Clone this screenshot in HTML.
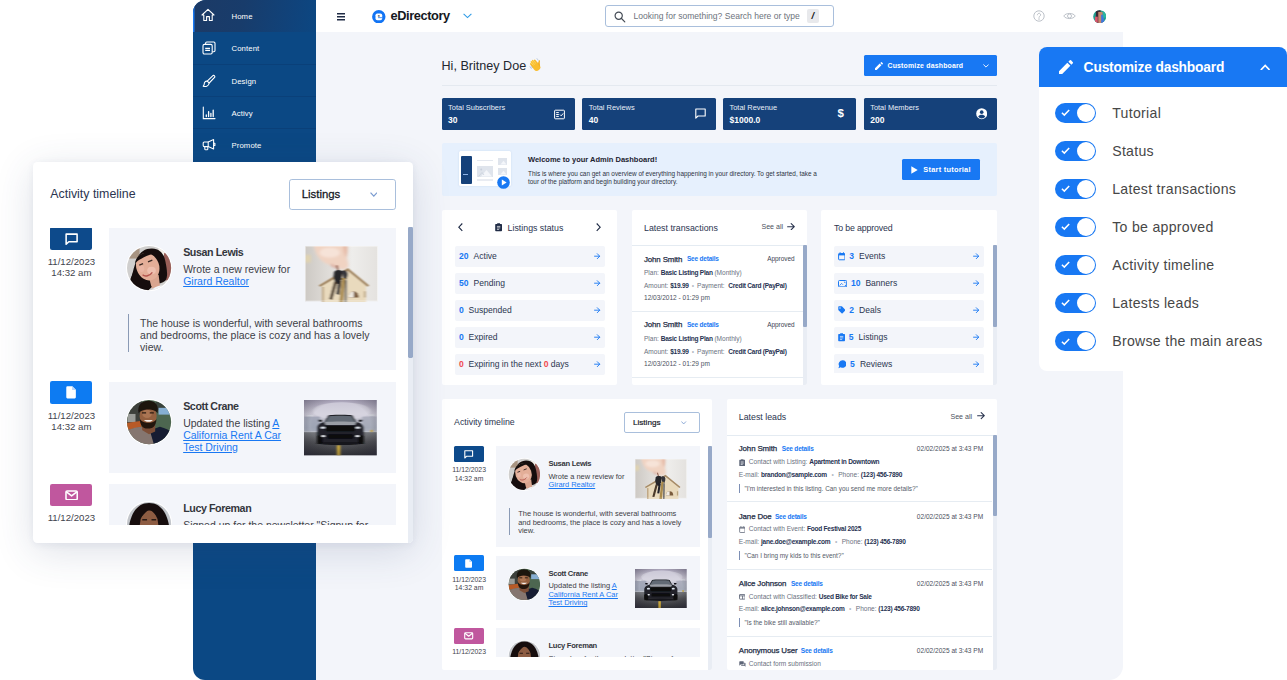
<!DOCTYPE html>
<html lang="en">
<head>
<meta charset="utf-8">
<title>eDirectory Admin Dashboard</title>
<style>
*{box-sizing:border-box;margin:0;padding:0}
html,body{width:1287px;height:680px;overflow:hidden;background:#fff}
body{font-family:"Liberation Sans",sans-serif;color:#2b3550;position:relative}
.abs{position:absolute}
svg{display:block}
a{color:#1878f3}

/* ===== main app window ===== */
#app{position:absolute;left:193px;top:0;width:930px;height:680px;background:#f3f5fa;border-radius:13px 0 14px 12px;overflow:hidden}
#side{position:absolute;left:0;top:0;width:122.6px;height:680px;background:#0b4884}
.nav{position:absolute;left:0;width:123px;height:32px;border-bottom:1px solid #0a4079;color:#fff;font-size:7.75px}
.nav span{position:absolute;left:38.5px;top:13.4px;line-height:8px;letter-spacing:.1px}
.nav svg{position:absolute;left:9px;top:9.2px}
.nav.on{background:linear-gradient(100deg,#1c3a66 0%,#183c6b 40%,#10437b 80%,#0c4782 100%);border-bottom:0;box-shadow:inset 1.5px 0 0 #1878f3}
.nav.on span{top:13.2px}
.nav.on svg{left:8.2px;top:8.4px}
#top{position:absolute;left:123px;top:0;width:807px;height:32px;background:#fff}

/* ===== content ===== */
#hi{position:absolute;left:248.5px;top:57.6px;font-size:12.6px;line-height:16px;color:#23272f;white-space:nowrap}
#cbtn{position:absolute;left:671px;top:55px;width:133px;height:21.4px;background:#1878f3;border-radius:1.5px;color:#fff;font-size:6.9px;font-weight:bold}
#hr1{position:absolute;left:248.5px;top:85px;width:555.5px;height:1px;background:#e4e9f0}
.stat{position:absolute;top:98.2px;width:133.3px;height:31.5px;background:#15417a;border-radius:1.5px;color:#fff}
.stat .l{position:absolute;left:6.5px;top:5.8px;font-size:7.45px;line-height:8px;color:#e8eef7}
.stat .v{position:absolute;left:6.5px;top:17.9px;font-size:8.5px;line-height:9px;font-weight:bold}
.stat svg{position:absolute}
#welcome{position:absolute;left:248.5px;top:142.7px;width:555.5px;height:53.6px;background:#e6f0fd;border-radius:2px}
.card{position:absolute;background:#fff;border-radius:2px;overflow:hidden}

.ct{position:absolute;top:12.9px;font-size:8.8px;line-height:11px;color:#2b3550;white-space:nowrap}
.row{position:absolute;left:13.1px;width:150.2px;height:20.7px;background:#f3f5fa;border-radius:2px;font-size:8.55px;line-height:21.6px;color:#2b3550;white-space:nowrap}
.row b{color:#1878f3;position:absolute;left:4px;top:0}
.row b.r,.row i{color:#f0494f;font-style:normal;font-weight:bold}
.row span{position:absolute;top:0}
.row .ar{position:absolute;right:4.4px;top:7.1px}
.row .ic{position:absolute;left:4px;top:6.2px}
.seeall{position:absolute;top:12.7px;font-size:7.05px;line-height:10px;color:#4b5160;white-space:nowrap}
.sb{position:absolute;top:35.7px;bottom:0;width:4.2px;right:0;background:#e9edf4}
.sb i{position:absolute;left:0;top:0;width:100%;background:#97a9c8;border-radius:1px}
.tx{position:absolute;left:0;width:171.3px;height:65.7px;border-bottom:1px solid #e6ecf2}
.tx .n{position:absolute;left:12.1px;top:8.2px;font-size:7.9px;line-height:11px;color:#232c45;white-space:nowrap;letter-spacing:-.13px;-webkit-text-stroke:.25px #232c45}
.tx .sd{position:absolute;top:9.1px;font-size:6.5px;line-height:10px;font-weight:bold;color:#1878f3;white-space:nowrap;letter-spacing:-.2px}
.tx .st{position:absolute;right:8.5px;top:9.1px;font-size:6.45px;line-height:10px;color:#3c4252;white-space:nowrap}
.tx .ln{position:absolute;left:12.1px;font-size:6.55px;line-height:10px;color:#6b7280;white-space:nowrap}
.tx .ln b{color:#273252;letter-spacing:-.25px}
.tx .ln em{font-style:normal;color:#b4bac4;padding:0 3px}
/*ACT*/
.act .nm{margin-top:1px}
.act .ds{margin-top:.4px}
.act .dt{margin-top:.4px}
.act .sel{position:absolute;left:182px;top:12.3px;width:76.1px;height:21.6px;border:1px solid #a9bfdc;border-radius:2px;background:#fff}
.act .sel span{position:absolute;left:8.2px;top:4.9px;font-size:8.1px;line-height:10px;color:#15181f;-webkit-text-stroke:.2px #15181f}
.act .scr{position:absolute;left:0;top:46.8px;width:266.6px;height:211px;overflow:hidden}
.act .bdg{position:absolute;left:12.3px;width:29.6px;height:16px;margin-top:-.3px;border-radius:1.5px}
.act .dt{position:absolute;left:2.3px;width:50px;text-align:center;font-size:6.85px;line-height:8.2px;color:#3f444d}
.act .it{position:absolute;left:54.2px;width:204px;background:#f3f5fa}
.act .av{position:absolute;left:11.7px;top:12.2px}
.act .nm{position:absolute;left:52.5px;top:12.3px;font-size:7.6px;line-height:10px;font-weight:bold;color:#33363c;white-space:nowrap;letter-spacing:-.29px}
.act .ds{position:absolute;left:52.5px;top:26px;font-size:7.45px;line-height:8.6px;color:#3d4046;white-space:nowrap}
.act .ds a{text-decoration:underline;color:#1878f3}
.act .th{position:absolute;left:139.1px;top:13.2px}
.act .qt{position:absolute;left:13.2px;top:62px;border-left:1px solid #8a9ab5;padding:1.9px 0 1.2px 8px;font-size:7.47px;line-height:8.65px;color:#3d4046;white-space:nowrap;height:27px}

/*scaled copy for floating card*/
#fl .act .nm{margin-top:1.41px}
#fl .act .ds{margin-top:0.56px}
#fl .act .dt{margin-top:0.56px}
#fl .act .sel{left:256.15px;top:17.31px;width:107.1px;height:30.4px;border:1.41px solid #a9bfdc;border-radius:2.81px}
#fl .act .sel span{left:11.54px;top:6.9px;font-size:11.4px;line-height:14.07px;-webkit-text-stroke:0.28px #15181f}
#fl .act .scr{top:65.87px;width:375.21px;height:296.96px}
#fl .act .bdg{left:17.31px;width:41.66px;height:22.52px;margin-top:-0.42px;border-radius:2.11px}
#fl .act .dt{left:3.24px;width:70.37px;font-size:9.64px;line-height:11.54px}
#fl .act .it{left:76.28px;width:287.11px}
#fl .act .av{left:16.47px;top:17.17px}
#fl .act .nm{left:73.89px;top:17.31px;font-size:10.7px;line-height:14.07px;letter-spacing:-0.41px}
#fl .act .ds{left:73.89px;top:36.59px;font-size:10.49px;line-height:12.1px}
#fl .act .th{left:195.77px;top:18.58px}
#fl .act .qt{left:18.58px;top:87.26px;border-left:1.41px solid #8a9ab5;padding:2.67px 0 1.69px 11.26px;font-size:10.51px;line-height:12.17px;height:38px}
#fl .card{border-radius:4.22px}
#fl .ct{top:18.16px;font-size:12.39px;line-height:15.48px}
#fl .sb{top:50.24px;width:5.91px}
#fl .sb i{border-radius:1.41px}
#fl .act .qt{margin-top:-1.2px}
#fl .act .nm{margin-top:-0.42px}
#fl .act .ds{margin-top:-0.42px}
#fl .act .dt{margin-top:0.42px;line-height:11.05px}
#fl .ct{margin-top:0.56px}
#fl .act .th2{margin-left:-1.13px}
/*ENDACT*/
.ld{position:absolute;left:0;width:265.9px;height:67.2px;border-bottom:1px solid #e6ecf2}
.ld .n{position:absolute;left:12.3px;top:8.2px;font-size:7.9px;line-height:11px;color:#232c45;white-space:nowrap;letter-spacing:-.13px;-webkit-text-stroke:.25px #232c45}
.ld .sd{position:absolute;top:9.1px;font-size:6.5px;line-height:10px;font-weight:bold;color:#1878f3;white-space:nowrap;letter-spacing:-.2px}
.ld .d{position:absolute;right:9.3px;top:9.1px;font-size:6.55px;line-height:10px;color:#4b5160;white-space:nowrap}
.ld .ln{position:absolute;left:12.3px;font-size:6.55px;line-height:10px;color:#6b7280;white-space:nowrap}
.ld .ln b{color:#273252;letter-spacing:-.25px}
.ld .ln em{font-style:normal;color:#b4bac4;padding:0 4.5px}
.ld .q{position:absolute;left:12.6px;top:48.4px;height:9px;border-left:1px solid #7d8fb5;padding-left:4.3px;font-size:6.42px;line-height:10px;color:#555b68;white-space:nowrap}
.ld .li{position:absolute;left:12.3px}

#fl{position:absolute;left:33px;top:162px;width:380px;height:381.4px}
#fl .card{box-shadow:0 8.5px 39px rgba(50,70,110,.16),0 1.4px 7px rgba(50,70,110,.07)}
#cz{position:absolute;left:1039px;top:47px;width:248px;height:324px;background:#fff;border-radius:8px 8px 0 8px;overflow:hidden}
#cz .hd{position:absolute;left:0;top:0;width:100%;height:39.5px;background:#1878f3;color:#fff}
#cz .hd span{position:absolute;left:44.6px;top:11.5px;font-size:13.8px;line-height:18px;font-weight:bold;white-space:nowrap;letter-spacing:-.18px}
.tg{position:absolute;left:16px;width:41px;height:20px;border-radius:10px;background:#1878f3}
.tg i{position:absolute;right:.8px;top:.8px;width:18.4px;height:18.4px;border-radius:50%;background:#fff}
.tg svg{position:absolute;left:6.2px;top:6.4px}
.tl{position:absolute;left:73.2px;font-size:14.1px;line-height:18px;color:#474747;white-space:nowrap;letter-spacing:.3px;margin-top:.5px}
</style>
</head>
<body>

<div id="app">
  <!-- sidebar -->
  <div id="side">
    <div class="nav on" style="top:0;height:32px">
      <svg width="14" height="14" viewBox="0 0 14 14" fill="none" stroke="#fff" stroke-width="1.1" stroke-linejoin="round" stroke-linecap="round"><path d="M1 7 L7 1.3 L13 7 H11.2 V12.5 H8.4 V8.6 H5.6 V12.5 H2.8 V7 Z"/></svg>
      <span>Home</span>
    </div>
    <div class="nav" style="top:32px;height:32.9px">
      <svg width="14" height="14" viewBox="0 0 14 14" fill="none" stroke="#fff" stroke-width="1.1" stroke-linejoin="round"><rect x="1" y="3.4" width="9.2" height="9.6" rx="1.4"/><path d="M3.6 3.2 V2.2 a1.2 1.2 0 0 1 1.2 -1.2 H11.8 a1.2 1.2 0 0 1 1.2 1.2 V9.6 a1.2 1.2 0 0 1 -1.2 1.2 H10.4"/><path d="M3.2 7.4 H8 M3.2 9.4 H8" stroke-width="1.3"/></svg>
      <span>Content</span>
    </div>
    <div class="nav" style="top:64.4px;height:32.5px">
      <svg width="14" height="14" viewBox="0 0 14 14" fill="none" stroke="#fff" stroke-width="1.1" stroke-linejoin="round" stroke-linecap="round"><path d="M11.2 1.3 a1.5 1.5 0 0 1 1.6 1.9 L7.2 9 L5.2 7.2 Z"/><path d="M5.2 7.2 C3.4 6.9 2.2 8.2 2.3 9.8 C2.3 11 1.6 11.8 1.2 12.2 C3.2 13 6.8 12.4 7.2 9"/></svg>
      <span>Design</span>
    </div>
    <div class="nav" style="top:96.9px">
      <svg width="14" height="14" viewBox="0 0 14 14" fill="none" stroke="#fff" stroke-width="1.1" stroke-linecap="round"><path d="M1.3 1 V12.6 H13"/><path d="M4.3 10.6 V9 M6.6 10.6 V5.6 M8.9 10.6 V7.4 M11.2 10.6 V4.2" stroke-width="1.3"/></svg>
      <span>Activy</span>
    </div>
    <div class="nav" style="top:128.9px;border-bottom:0">
      <svg width="14" height="14" viewBox="0 0 14 14" fill="none" stroke="#fff" stroke-width="1.1" stroke-linejoin="round" stroke-linecap="round"><path d="M1.2 5 a1 1 0 0 1 1 -1 H6.2 L11.6 1.6 V11 L6.2 8.6 H2.2 a1 1 0 0 1 -1 -1 Z"/><path d="M6.2 4 V8.6 M2.8 8.8 V11 a.8 .8 0 0 0 .8 .8 H5 a.8 .8 0 0 0 .8 -.8 V8.8 M11.8 5.2 H12.9 V7.4 H11.8"/></svg>
      <span>Promote</span>
    </div>
  </div>

  <!-- top bar -->
  <div id="top">
    <svg class="abs" style="left:21.2px;top:12.6px" width="8" height="8" viewBox="0 0 8 8"><path d="M0 .7H8M0 3.7H8M0 6.7H8" stroke="#1f2b45" stroke-width="1.35"/></svg>
    <svg class="abs" style="left:56.2px;top:9.7px" width="13.6" height="13.6" viewBox="0 0 14 14"><circle cx="7" cy="7" r="6.9" fill="#1274f4"/><rect x="3.6" y="3.5" width="6.9" height="7" rx="1.9" fill="#fff"/><ellipse cx="7" cy="6.1" rx="1.1" ry=".6" fill="#3a3a40"/><path d="M6.2 7.9H10.6" stroke="#1274f4" stroke-width=".8"/></svg>
    <div id="logo" class="abs" style="left:74.5px;top:7.5px;font-size:12.8px;line-height:16px;color:#15181e;font-weight:bold;letter-spacing:-.4px">eDirectory</div>
    <svg class="abs" style="left:146.7px;top:12.8px" width="9" height="6" viewBox="0 0 9 6" fill="none" stroke="#2e9be6" stroke-width="1.1"><path d="M.6 .8L4.5 4.6L8.4 .8"/></svg>
    <div class="abs" style="left:289px;top:5px;width:229px;height:21.5px;border:1px solid #a9bfdc;border-radius:3px;background:#fff">
      <svg class="abs" style="left:8px;top:4.6px" width="12" height="12" viewBox="0 0 12 12" fill="none" stroke="#444b55" stroke-width="1.2" stroke-linecap="round"><circle cx="4.7" cy="4.7" r="3.6"/><path d="M7.5 7.5L10.8 10.8"/></svg>
      <div id="srch" class="abs" style="left:27.5px;top:5.2px;font-size:8.55px;line-height:10px;color:#6d737d;white-space:nowrap">Looking for something? Search here or type</div>
      <div class="abs" style="left:201px;top:3.2px;width:11.5px;height:14px;background:#e8e9ec;border-radius:2px;font-size:9.5px;line-height:14px;text-align:center;font-weight:bold;color:#111;font-style:italic">/</div>
    </div>
    <svg class="abs" style="left:717.4px;top:10.4px" width="12" height="12" viewBox="0 0 12 12" fill="none" stroke="#b6bbc3" stroke-width=".9"><circle cx="6" cy="6" r="5.2"/><path d="M4.4 4.8 a1.6 1.6 0 1 1 2.4 1.4 c-.6 .35 -.8 .6 -.8 1.2 M6 8.6 v.9" stroke-linecap="round"/></svg>
    <svg class="abs" style="left:747px;top:11.2px" width="13" height="10" viewBox="0 0 13 10" fill="none" stroke="#b6bbc3" stroke-width=".9"><path d="M.8 5 C2.6 1.6 10.4 1.6 12.2 5 C10.4 8.4 2.6 8.4 .8 5Z"/><circle cx="6.5" cy="5" r="2"/></svg>
    <svg class="abs" style="left:777px;top:9.6px" width="13.4" height="13.4" viewBox="0 0 14 14"><defs><clipPath id="avc"><circle cx="7" cy="7" r="6.8"/></clipPath></defs><g clip-path="url(#avc)"><rect width="14" height="14" fill="#1f9e8f"/><rect x="3" y="0" width="5" height="14" fill="#3a2a35"/><rect x="5.5" y="2" width="4.5" height="12" fill="#c9876e"/><rect x="8.5" y="5" width="3" height="9" fill="#3f78d8"/><rect x="2" y="7" width="3" height="7" fill="#d9556b"/><rect x="10.5" y="0" width="3.5" height="8" fill="#2bb3a0"/></g></svg>
  </div>

  <!-- heading -->
  <div id="hi">Hi, Britney Doe <svg style="display:inline-block;vertical-align:-2.2px;margin-left:-1px" width="13.4" height="13.4" viewBox="0 0 13 13" role="img" aria-label="👋"><g transform="rotate(-38 6.8 7.6)"><rect x="3.100" y="2.300" width="1.700" height="5.500" rx=".85" fill="#f8b92a"/><rect x="4.800" y="1" width="1.700" height="6.500" rx=".85" fill="#fbc534"/><rect x="6.500" y=".9" width="1.700" height="6.500" rx=".85" fill="#fbc534"/><rect x="8.200" y="1.900" width="1.700" height="5.500" rx=".85" fill="#f8b92a"/><path d="M3.100 5.800H9.900V9.200a3.400 3.400 0 0 1-6.800 0Z" fill="#f9bd2e"/><path d="M9.200 7.600C10.400 6.200 11.800 5.600 12.800 5.200C13.200 6 12.600 6.600 11.800 7.200C11 8 10.400 9.800 9 11Z" fill="#f5ae22"/></g><path d="M.9 8.600L2.300 10.200M1.900 8L3.100 9.400M7.800 .6L9 2.200" stroke="#a9bcd6" stroke-width=".7" stroke-linecap="round" fill="none"/></svg></div>
  <div id="cbtn">
    <svg class="abs" style="left:10.5px;top:6.6px" width="8" height="8" viewBox="0 0 8 8" fill="#fff"><path d="M0 6.3V8H1.7L6.4 3.3L4.7 1.6ZM7.8 1.9a.5 .5 0 0 0 0-.7L6.8 .2a.5 .5 0 0 0-.7 0L5.3 1L7 2.7Z"/></svg>
    <span id="cbt" class="abs" style="left:23.5px;top:7.3px;line-height:8px;white-space:nowrap;letter-spacing:.2px">Customize dashboard</span>
    <svg class="abs" style="left:118.5px;top:8.6px" width="6" height="4" viewBox="0 0 6 4" fill="none" stroke="#fff" stroke-width=".9"><path d="M.4 .5L3 3.1L5.6 .5"/></svg>
  </div>
  <div id="hr1"></div>

  <!-- stats -->
  <div class="stat" style="left:248.6px"><div class="l">Total Subscribers</div><div class="v">30</div>
    <svg style="left:112px;top:10.5px" width="11" height="11" viewBox="0 0 11 11" fill="none" stroke="#fff" stroke-width="1"><rect x=".6" y="1.2" width="9.8" height="8.6" rx=".8"/><path d="M2.2 3.6H4.8M2.2 5.5H4.8M2.2 7.4H4.8M6 5.6L7.2 6.8L9.2 4.4"/></svg></div>
  <div class="stat" style="left:389.3px"><div class="l">Total Reviews</div><div class="v">40</div>
    <svg style="left:112.5px;top:10.3px" width="11" height="11" viewBox="0 0 11 11" fill="none" stroke="#fff" stroke-width="1.1" stroke-linejoin="round"><path d="M.8 1H10.2V8H3L.8 10.2Z"/></svg></div>
  <div class="stat" style="left:530px"><div class="l">Total Revenue</div><div class="v">$1000.0</div>
    <div class="abs" style="left:114.6px;top:9.3px;font-size:11.5px;line-height:13px;font-weight:bold">$</div></div>
  <div class="stat" style="left:670.7px"><div class="l">Total Members</div><div class="v">200</div>
    <svg style="left:112.3px;top:10.2px" width="11.4" height="11.4" viewBox="0 0 12 12"><circle cx="6" cy="6" r="5.8" fill="#fff"/><circle cx="6" cy="4.4" r="1.9" fill="#15417a"/><path d="M2.3 9.3C3 7.6 4.4 7.2 6 7.2S9 7.6 9.7 9.3A4.8 4.8 0 0 1 2.3 9.3Z" fill="#15417a"/></svg></div>

  <!-- welcome -->
  <div id="welcome">
    <div class="abs" style="left:17px;top:8.5px;width:52px;height:34.5px;background:#fff;border-radius:1.5px;box-shadow:0 0 2px rgba(120,150,200,.25)">
      <div class="abs" style="left:2.2px;top:5px;width:11.5px;height:27.5px;background:#15417a;border-radius:1px"></div>
      <div class="abs" style="left:4px;top:23px;width:5px;height:1px;background:#8fb3e6"></div>
      <div class="abs" style="left:18px;top:8.5px;width:16px;height:1.8px;background:#e4e8ef"></div>
      <div class="abs" style="left:18px;top:14.5px;width:16px;height:11px;background:#dfe4ec"></div><svg class="abs" style="left:18px;top:14.5px" width="16" height="11" viewBox="0 0 16 11"><path d="M4 10.500L9.500 4L15 10.500Z" fill="#f4f6fa"/><circle cx="4.200" cy="3.400" r="1" fill="#c9d0dc"/><path d="M1.500 10.500L5 6.500L7 9" stroke="#c9d0dc" stroke-width=".8" fill="none"/></svg>
      <div class="abs" style="left:39px;top:7px;width:9.5px;height:7px;background:#dfe4ec"></div><svg class="abs" style="left:39px;top:7px" width="9.500" height="7" viewBox="0 0 9.500 7"><path d="M2.500 6.500L5.500 2.800L8.500 6.500Z" fill="#f4f6fa"/></svg>
      <div class="abs" style="left:39px;top:16.5px;width:9.5px;height:7px;background:#dfe4ec"></div><svg class="abs" style="left:39px;top:16.500px" width="9.500" height="7" viewBox="0 0 9.500 7"><path d="M2.500 6.500L5.500 2.800L8.500 6.500Z" fill="#f4f6fa"/></svg>
      <div class="abs" style="left:18px;top:28px;width:16px;height:1.4px;background:#e9ecf2"></div>
      <svg class="abs" style="left:38.5px;top:25px" width="13" height="13" viewBox="0 0 13 13"><circle cx="6.5" cy="6.5" r="6.3" fill="#1878f3"/><path d="M4.8 3.6L9.6 6.5L4.8 9.4Z" fill="#fff"/></svg>
    </div>
    <div id="wt" class="abs" style="left:86.5px;top:13px;font-size:7.5px;line-height:8px;font-weight:bold;color:#1c2230;white-space:nowrap">Welcome to your Admin Dashboard!</div>
    <div id="wp" class="abs" style="left:86.5px;top:27.8px;font-size:6.42px;line-height:7.9px;color:#2c3342;white-space:nowrap">This is where you can get an overview of everything happening in your directory. To get started, take a<br>tour of the platform and begin building your directory.</div>
    <div class="abs" style="left:460.3px;top:16.3px;width:78.2px;height:21.2px;background:#1878f3;border-radius:1.5px;color:#fff">
      <svg class="abs" style="left:9px;top:6.7px" width="7" height="8" viewBox="0 0 7 8"><path d="M.3 .2L6.7 4L.3 7.8Z" fill="#fff"/></svg>
      <span id="stt" class="abs" style="left:21.5px;top:7px;font-size:7.4px;line-height:8px;font-weight:bold;white-space:nowrap;letter-spacing:.25px">Start tutorial</span>
    </div>
  </div>

  <div class="card" id="c-status" style="left:248.8px;top:209.8px;width:175.6px;height:175.3px">
    <svg class="abs" style="left:16.6px;top:13.6px" width="5" height="8.4" viewBox="0 0 5 8.4" fill="none" stroke="#1f2b45" stroke-width="1.1"><path d="M4.3 .5L.8 4.2L4.3 7.9"/></svg>
    <svg class="abs" style="left:154px;top:13.6px" width="5" height="8.4" viewBox="0 0 5 8.4" fill="none" stroke="#1f2b45" stroke-width="1.1"><path d="M.7 .5L4.2 4.2L.7 7.9"/></svg>
    <svg class="abs" style="left:53.6px;top:13.5px" width="7.2" height="8.4" viewBox="0 0 7.2 8.4"><path d="M.2 1.6a.7 .7 0 0 1 .7-.7H2.2V.2H5V.9H6.3a.7 .7 0 0 1 .7 .7V7.6a.7 .7 0 0 1-.7 .7H.9a.7 .7 0 0 1-.7-.7Z" fill="#1f2b45"/><path d="M1.9 3.4H5.3M1.9 4.9H5.3M1.9 6.4H4.2" stroke="#fff" stroke-width=".7"/></svg>
    <div class="ct" id="t-status" style="left:65.8px">Listings status</div>
    <div class="row" style="top:36.2px"><b>20</b><span style="left:18.7px">Active</span><svg class="ar" width="6.4" height="6.4" viewBox="0 0 7 7" fill="none" stroke="#1878f3" stroke-width="1" stroke-linecap="round" stroke-linejoin="round"><path d="M.6 3.5H6.2M3.6 .8L6.3 3.5L3.6 6.2"/></svg></div>
    <div class="row" style="top:63.2px"><b>50</b><span style="left:18.7px">Pending</span><svg class="ar" width="6.4" height="6.4" viewBox="0 0 7 7" fill="none" stroke="#1878f3" stroke-width="1" stroke-linecap="round" stroke-linejoin="round"><path d="M.6 3.5H6.2M3.6 .8L6.3 3.5L3.6 6.2"/></svg></div>
    <div class="row" style="top:90.2px"><b>0</b><span style="left:13.7px">Suspended</span><svg class="ar" width="6.4" height="6.4" viewBox="0 0 7 7" fill="none" stroke="#1878f3" stroke-width="1" stroke-linecap="round" stroke-linejoin="round"><path d="M.6 3.5H6.2M3.6 .8L6.3 3.5L3.6 6.2"/></svg></div>
    <div class="row" style="top:117.2px"><b>0</b><span style="left:13.7px">Expired</span><svg class="ar" width="6.4" height="6.4" viewBox="0 0 7 7" fill="none" stroke="#1878f3" stroke-width="1" stroke-linecap="round" stroke-linejoin="round"><path d="M.6 3.5H6.2M3.6 .8L6.3 3.5L3.6 6.2"/></svg></div>
    <div class="row" style="top:144.2px"><b class="r">0</b><span style="left:13.7px">Expiring in the next <i>0</i> days</span><svg class="ar" width="6.4" height="6.4" viewBox="0 0 7 7" fill="none" stroke="#1878f3" stroke-width="1" stroke-linecap="round" stroke-linejoin="round"><path d="M.6 3.5H6.2M3.6 .8L6.3 3.5L3.6 6.2"/></svg></div>
  </div>
  <div class="card" id="c-tx" style="left:438.9px;top:209.8px;width:175.5px;height:175.3px">
    <div class="ct" id="t-tx" style="left:12.1px">Latest transactions</div>
    <div class="seeall" id="sa1" style="left:129.6px">See all</div>
    <svg class="abs" style="left:155.6px;top:13.1px" width="8" height="7.4" viewBox="0 0 8 7.4" fill="none" stroke="#2b3550" stroke-width="1.1" stroke-linecap="round" stroke-linejoin="round"><path d="M.6 3.7H7.2M4.2 .7L7.3 3.7L4.2 6.7"/></svg>
    <div class="abs" style="left:0;top:35px;width:100%;height:1px;background:#e4ebf2"></div>
    <div class="tx" style="top:35.6px;height:66.6px"><div class="abs" style="left:0;top:0px;width:100%">
      <div class="n">John Smith</div><div class="sd" style="left:55.1px">See details</div><div class="st">Approved</div>
      <div class="ln" style="top:22.7px">Plan: <b>Basic Listing Plan</b> (Monthly)</div>
      <div class="ln" style="top:35.6px">Amount: <b>$19.99</b><em>•</em>Payment: &nbsp;<b>Credit Card (PayPal)</b></div>
      <div class="ln" style="top:48.1px;color:#4b5160">12/03/2012 - 01:29 pm</div>
    </div></div>
    <div class="tx" style="top:102.2px;height:65.6px"><div class="abs" style="left:0;top:-0.9px;width:100%">
      <div class="n">John Smith</div><div class="sd" style="left:55.1px">See details</div><div class="st">Approved</div>
      <div class="ln" style="top:22.7px">Plan: <b>Basic Listing Plan</b> (Monthly)</div>
      <div class="ln" style="top:35.6px">Amount: <b>$19.99</b><em>•</em>Payment: &nbsp;<b>Credit Card (PayPal)</b></div>
      <div class="ln" style="top:48.1px;color:#4b5160">12/03/2012 - 01:29 pm</div>
    </div></div>
    <div class="tx" style="top:167.8px;height:65.6px"><div class="abs" style="left:0;top:-0.9px;width:100%">
      <div class="n">John Smith</div><div class="sd" style="left:55.1px">See details</div><div class="st">Approved</div>
      <div class="ln" style="top:22.7px">Plan: <b>Basic Listing Plan</b> (Monthly)</div>
      <div class="ln" style="top:35.6px">Amount: <b>$19.99</b><em>•</em>Payment: &nbsp;<b>Credit Card (PayPal)</b></div>
      <div class="ln" style="top:48.1px;color:#4b5160">12/03/2012 - 01:29 pm</div>
    </div></div>
    <div class="sb"><i style="height:81.2px"></i></div>
  </div>
  <div class="card" id="c-ap" style="left:628.2px;top:209.8px;width:175.7px;height:175.3px">
    <div class="ct" id="t-ap" style="left:12.8px;letter-spacing:-.15px">To be approved</div>
    <div class="abs" style="left:12.5px;top:36.2px;width:150.4px;height:126.8px;overflow:hidden">
      <div class="row" style="left:0;top:0px;width:150.4px"><svg class="ic" width="7.6" height="8.4" viewBox="0 0 7.6 8.4" fill="none" stroke="#1878f3"><rect x=".6" y="1.5" width="6.4" height="6.3" rx=".7" stroke-width="1"/><path d="M.6 2.6H7" stroke-width="1.6"/><path d="M2.1 .3V1.6M5.5 .3V1.6" stroke-width="1"/></svg><b style="left:15.6px">3</b><span style="left:25.4px">Events</span><svg class="ar" style="right:5.2px" width="6.4" height="6.4" viewBox="0 0 7 7" fill="none" stroke="#1878f3" stroke-width="1" stroke-linecap="round" stroke-linejoin="round"><path d="M.6 3.5H6.2M3.6 .8L6.3 3.5L3.6 6.2"/></svg></div>
      <div class="row" style="left:0;top:27px;width:150.4px"><svg class="ic" style="top:6.8px" width="9.2" height="7.4" viewBox="0 0 9.2 7.4" fill="none" stroke="#1878f3" stroke-width="1"><rect x=".5" y=".5" width="8.2" height="6.4" rx="1"/><path d="M1.6 5.6L3.6 3.4L5 4.8" stroke-width=".8"/><path d="M5.6 1.8H7.4V3.4Z" fill="#1878f3" stroke="none"/><path d="M6.4 6.2L8 4.4V6.2Z" fill="#1878f3" stroke="none"/></svg><b style="left:17.4px">10</b><span style="left:31.7px">Banners</span><svg class="ar" style="right:5.2px" width="6.4" height="6.4" viewBox="0 0 7 7" fill="none" stroke="#1878f3" stroke-width="1" stroke-linecap="round" stroke-linejoin="round"><path d="M.6 3.5H6.2M3.6 .8L6.3 3.5L3.6 6.2"/></svg></div>
      <div class="row" style="left:0;top:54px;width:150.4px"><svg class="ic" width="7.6" height="7.8" viewBox="0 0 7.6 7.8"><path d="M.3 .9a.6 .6 0 0 1 .6-.6H3.6a.8 .8 0 0 1 .55 .23L7.2 3.6a.7 .7 0 0 1 0 1L4.6 7.3a.7 .7 0 0 1-1 0L.5 4.2a.8 .8 0 0 1-.2-.55Z" fill="#1878f3"/><circle cx="2" cy="2" r=".7" fill="#f3f5fa"/></svg><b style="left:15.6px">2</b><span style="left:25.4px">Deals</span><svg class="ar" style="right:5.2px" width="6.4" height="6.4" viewBox="0 0 7 7" fill="none" stroke="#1878f3" stroke-width="1" stroke-linecap="round" stroke-linejoin="round"><path d="M.6 3.5H6.2M3.6 .8L6.3 3.5L3.6 6.2"/></svg></div>
      <div class="row" style="left:0;top:81px;width:150.4px"><svg class="ic" width="7.2" height="8.4" viewBox="0 0 7.2 8.4"><path d="M.2 1.6a.7 .7 0 0 1 .7-.7H2.2V.2H5V.9H6.3a.7 .7 0 0 1 .7 .7V7.6a.7 .7 0 0 1-.7 .7H.9a.7 .7 0 0 1-.7-.7Z" fill="#1878f3"/><path d="M1.9 3.4H5.3M1.9 4.9H5.3M1.9 6.4H4.2" stroke="#f3f5fa" stroke-width=".7"/></svg><b style="left:15px">5</b><span style="left:24.8px">Listings</span><svg class="ar" style="right:5.2px" width="6.4" height="6.4" viewBox="0 0 7 7" fill="none" stroke="#1878f3" stroke-width="1" stroke-linecap="round" stroke-linejoin="round"><path d="M.6 3.5H6.2M3.6 .8L6.3 3.5L3.6 6.2"/></svg></div>
      <div class="row" style="left:0;top:108px;width:150.4px"><svg class="ic" style="top:6px" width="8.8" height="8.6" viewBox="0 0 8.8 8.6"><path d="M4.6 .3a3.9 3.7 0 1 1-1.9 6.9L.4 8.2L1.2 5.9A3.9 3.7 0 0 1 4.6 .3Z" fill="#1878f3"/></svg><b style="left:16.4px">5</b><span style="left:26.2px">Reviews</span><svg class="ar" style="right:5.2px" width="6.4" height="6.4" viewBox="0 0 7 7" fill="none" stroke="#1878f3" stroke-width="1" stroke-linecap="round" stroke-linejoin="round"><path d="M.6 3.5H6.2M3.6 .8L6.3 3.5L3.6 6.2"/></svg></div>
    </div>
    <div class="sb" style="width:3.8px"><i style="height:81.2px"></i></div>
  </div>
  <!--ACT-IN--><div class="card act " style="left:248.8px;top:399.4px;width:270px;height:271px">
    <div class="ct at" style="left:12.3px;top:17.6px">Activity timeline</div>
    <div class="sel"><span>Listings</span><svg class="abs" style="left:56.6px;top:8.2px" width="5.4" height="3.6" viewBox="0 0 7 4.6" fill="none" stroke="#7a9bd0" stroke-width="1.1"><path d="M.5 .6L3.5 3.8L6.5 .6"/></svg></div>
    <div class="scr">
      <div class="bdg" style="top:0;background:#0d4a8b"><svg class="abs" style="left:10.4px;top:3.8px" width="9.4" height="9" viewBox="0 0 9.4 9" fill="none" stroke="#fff" stroke-width="1.1" stroke-linejoin="round"><path d="M.8 .8H8.600V6.200H2.700L.8 8Z"/></svg></div>
      <div class="dt" style="top:19.8px">11/12/2023<br>14:32 am</div>
      <div class="it" style="top:0;height:101.3px">
        <svg class="av" width="32.8" height="32.8" viewBox="0 0 34 34"><defs><clipPath id="ac1a"><circle cx="17" cy="17" r="16.250"/></clipPath><filter id="bl1a"><feGaussianBlur stdDeviation=".4"/></filter></defs><circle cx="17" cy="17" r="17" fill="#fff"/><g clip-path="url(#ac1a)"><rect width="34" height="34" fill="#d0cfce"/><g filter="url(#bl1a)"><rect x="0" y="0" width="10" height="10" fill="#a89482"/><rect x="24" y="1" width="6" height="9" fill="#f4efe8"/><rect x="28" y="6" width="7" height="20" fill="#9a5f58"/><path d="M2 36C3 28 5 19 7 13C9 6 13 2.500 19 2.500C25 2.500 28 6.500 29 12C30 17 31 22 29.500 25.500C28 28 25 28.500 22 28.500L13 36Z" fill="#17110f"/><path d="M17 24L24 22L25 30L19 32Z" fill="#d9a58f"/><ellipse cx="16" cy="16" rx="8.400" ry="10.300" fill="#e3ae98" transform="rotate(-20 16 16)"/><path d="M6.500 13.500C8 7 14 4 21 6C16 7.500 10 10 6.500 13.500Z" fill="#17110f"/><ellipse cx="18.800" cy="18.800" rx="3.200" ry="2.800" fill="#eec0af"/><ellipse cx="11.500" cy="17.500" rx="2" ry="2.400" fill="#e9b6a4"/><path d="M9.800 14.800L12.600 13.800M16.200 12.400L19.400 11.200" stroke="#3a2a25" stroke-width="1"/><path d="M12.200 22C14 23.600 17.600 22.800 19.400 20.200" stroke="#b5564f" stroke-width="1" fill="none"/><path d="M1 36C2 28 4 22 6.500 18C8 24 12 29 19 30.500L14 36Z" fill="#17110f"/><path d="M18 35C19.500 31 25 28.500 31.500 30L33 36Z" fill="#f4f4f6"/></g></g></svg>
        <div class="nm">Susan Lewis</div>
        <div class="ds">Wrote a new review for<br><a>Girard Realtor</a></div>
        <svg class="th" width="51.7" height="39.3" viewBox="0 0 100 100" preserveAspectRatio="none"><defs><filter id="tb1a" x="-10%" y="-10%" width="120%" height="120%"><feGaussianBlur stdDeviation="1.100"/></filter><filter id="tc1a" x="-10%" y="-10%" width="120%" height="120%"><feGaussianBlur stdDeviation="2.400"/></filter><linearGradient id="tg1a" x1="0" x2="1"><stop offset="0" stop-color="#cdc9c4"/><stop offset=".3" stop-color="#dedbd7"/><stop offset=".65" stop-color="#eeedeb"/><stop offset="1" stop-color="#e4e2df"/></linearGradient></defs><rect width="100" height="100" fill="url(#tg1a)"/><g filter="url(#tc1a)"><rect x="0" y="16" width="8" height="14" fill="#e0d3b0"/><path d="M12 -4C13 12 19 25 28 31C34 35 40 33 44 38C48 43 55 44 58.500 39C61.500 33 57.500 25 57 18C58.500 10 58 4 57 -4Z" fill="#f0d3c2"/><ellipse cx="34" cy="12" rx="14" ry="9" fill="#f6e3d8"/><path d="M51.500 -4H58.500C59 8 58.500 16 56.500 21C53.500 15 52.500 7 51.500 -4Z" fill="#e6bca8"/><path d="M36 33C38 38 43 39 45.500 36.500" stroke="#d79c8e" stroke-width="2.500" fill="none"/></g><g filter="url(#tb1a)"><path d="M19 71L59 40L88 71L84 73L84 104L23 104L23 73Z" fill="#e9dabd"/><path d="M19 71L59 40L88 71L86 74L59 45L21 74Z" fill="#a58a68"/><rect x="23.500" y="74" width="2.500" height="30" fill="#b9a07c"/><path d="M60 93a7 11 0 0 1 14 0Z" fill="#7a5c3e"/><path d="M60 93a7 11 0 0 1 7 -11V93Z" fill="#f1ece4"/><rect x="81" y="82" width="2.500" height="11" fill="#bba581"/><path d="M43.500 35L46 47" stroke="#8a5a48" stroke-width="2"/><path d="M40 47C42 42 50 42 52 47L50.500 60L46 69L41 66L39 56Z" fill="#26262b"/><path d="M51 45C56 42 60 47 58.500 54L57 61L52.500 58Z" fill="#34343b"/><path d="M40 64L44 66L37.500 97L33.500 96Z" fill="#4b3a2c"/><path d="M46 62L50 63L47 88L43 87Z" fill="#20222c"/><path d="M51 58L55.500 58L52 104H47Z" fill="#a98a4c"/><path d="M55 62L57.500 62L57 104H54.500Z" fill="#55565c"/></g><rect x=".5" y=".6" width="99" height="98.800" fill="none" stroke="#fff" stroke-opacity=".55" stroke-width="1.200"/></svg>
        <div class="qt">The house is wonderful, with several bathrooms<br>and bedrooms, the place is cozy and has a lovely<br>view.</div>
      </div>
      <div class="bdg" style="top:109.4px;background:#0d7bf2"><svg class="abs" style="left:11.4px;top:3.6px" width="7.2" height="9" viewBox="0 0 7.2 9"><path d="M.2 1a.8 .8 0 0 1 .8-.8H4.500L7 2.700V8a.8 .8 0 0 1-.8 .8H1a.8 .8 0 0 1-.8-.8Z" fill="#fff"/><path d="M4.300 .2V2.900H7Z" fill="#b8d6fb"/></svg></div>
      <div class="dt" style="top:129.2px">11/12/2023<br>14:32 am</div>
      <div class="it" style="top:109.4px;height:64.9px">
        <svg class="av" width="32.8" height="32.8" viewBox="0 0 34 34"><defs><clipPath id="ac2a"><circle cx="17" cy="17" r="16.250"/></clipPath><filter id="bl2a"><feGaussianBlur stdDeviation=".4"/></filter></defs><circle cx="17" cy="17" r="17" fill="#fff"/><g clip-path="url(#ac2a)"><rect width="34" height="34" fill="#4d6650"/><g filter="url(#bl2a)"><rect x="0" y="0" width="12" height="18" fill="#3d403b"/><rect x="1" y="11" width="6" height="6" fill="#9a9c98"/><rect x="22" y="2" width="12" height="6" fill="#39423a"/><rect x="24" y="6.500" width="9" height="5" fill="#86aed2"/><path d="M0 17.600L10.500 16.200L11.500 20.500L0 23Z" fill="#b85a28"/><rect x="0" y="24" width="34" height="11" fill="#85766f"/><path d="M0 35V24C4 21.500 9 20.500 13 20.500L19 22L22 35Z" fill="#85766f"/><path d="M17.500 23L25 20.500C29 21.500 32 23 34 25V35H21Z" fill="#141c31"/><path d="M11.500 18H21.500V24L17 26L12 23Z" fill="#7d5038"/><ellipse cx="16.300" cy="12.600" rx="6.300" ry="7.900" fill="#94603f"/><ellipse cx="15.500" cy="11" rx="3.500" ry="3" fill="#ab7552"/><path d="M9.300 10.500C8 4 12 1.200 16.500 1.200C21.500 1.200 24.500 4.500 23.200 10.500C21.500 6.800 11.500 6.800 9.300 10.500Z" fill="#1b1310"/><path d="M10.200 14.500C10.500 21.500 14 21.800 16.500 21.800C19 21.800 22 21 22.500 14.500C21 18.500 12 18.500 10.200 14.500Z" fill="#22150f"/><path d="M13.200 15.400C15 17.200 18.200 17.200 19.800 15.400Z" fill="#f5f1ee"/><path d="M11.800 10.200H14.800M17.500 10.200H20.500" stroke="#2a1a12" stroke-width="1"/></g></g></svg>
        <div class="nm">Scott Crane</div>
        <div class="ds">Updated the listing <a>A</a><br><a>California Rent A Car</a><br><a>Test Driving</a></div>
        <svg class="th th2" width="51.7" height="39.3" viewBox="0 0 100 100" preserveAspectRatio="none"><defs><filter id="tb2a" x="-10%" y="-10%" width="120%" height="120%"><feGaussianBlur stdDeviation="1.100"/></filter><linearGradient id="tg2a" x1="0" y1="0" x2="0" y2="1"><stop offset="0" stop-color="#aba5bb"/><stop offset=".25" stop-color="#ccc9d6"/><stop offset=".5" stop-color="#b7bbc7"/><stop offset=".575" stop-color="#c9ccd3"/><stop offset=".59" stop-color="#74767b"/><stop offset=".75" stop-color="#55565b"/><stop offset="1" stop-color="#36373c"/></linearGradient><radialGradient id="tv2a" cx=".5" cy=".45" r=".75"><stop offset=".55" stop-color="#000" stop-opacity="0"/><stop offset="1" stop-color="#1a1830" stop-opacity=".42"/></radialGradient></defs><rect width="100" height="100" fill="url(#tg2a)"/><g filter="url(#tb2a)"><ellipse cx="52" cy="20" rx="40" ry="16" fill="#dedce6" opacity=".6"/><rect x="0" y="30" width="22" height="27" fill="#8e95a8" opacity=".6"/><rect x="80" y="30" width="20" height="27" fill="#9499aa" opacity=".5"/><path d="M8 28V58M93 27V58" stroke="#aab0bd" stroke-width="1.600"/><path d="M4 28.500H12M89 27.500H97" stroke="#d9dbe2" stroke-width="2.200"/><rect x="91.500" y="54" width="3" height="4" fill="#c9a73a"/><rect x="45.200" y="82" width="4.800" height="18" fill="#c9a73a"/><ellipse cx="50" cy="78" rx="33" ry="3.500" fill="#17181c"/><path d="M33 28C38 26.500 62 26.500 67 28L72 40C77 41 81 44 82 50V76H18V50C19 44 23 41 28 40Z" fill="#202329"/><path d="M34.500 29.500C40 28.300 60 28.300 65.500 29.500L70.500 40H29.500Z" fill="#626a74"/><path d="M28 40C40 38.500 60 38.500 72 40L70 45H30Z" fill="#9a9ea6"/><path d="M19.500 35.500H24.500V39.500H20.500ZM75.500 35.500H80.500L79.500 39.500H75.500Z" fill="#0f1013"/><rect x="30" y="47" width="40" height="9.500" rx="2" fill="#07080a"/><rect x="32" y="62" width="36" height="8" rx="1.500" fill="#0a0b0d"/><rect x="18" y="64" width="7.500" height="14.500" rx="2" fill="#08090b"/><rect x="74.500" y="64" width="7.500" height="14.500" rx="2" fill="#08090b"/><ellipse cx="26" cy="50" rx="3" ry="2.200" fill="#dfe5ee"/><ellipse cx="74" cy="50" rx="3" ry="2.200" fill="#dfe5ee"/><ellipse cx="26.500" cy="65.500" rx="2.400" ry="2" fill="#eef1f6"/><ellipse cx="73.500" cy="65.500" rx="2.400" ry="2" fill="#eef1f6"/></g><rect width="100" height="100" fill="url(#tv2a)"/></svg>
      </div>
      <div class="bdg" style="top:182px;background:#c0579e"><svg class="abs" style="left:10.4px;top:4.4px" width="9.4" height="7.6" viewBox="0 0 9.4 7.6" fill="none" stroke="#fff" stroke-width="1.1" stroke-linejoin="round"><rect x=".7" y=".7" width="8" height="6.200" rx=".8"/><path d="M1 1.300L4.700 4.200L8.400 1.300"/></svg></div>
      <div class="dt" style="top:201.8px">11/12/2023<br>14:32 am</div>
      <div class="it" style="top:182px;height:80px">
        <svg class="av" width="32.8" height="32.8" viewBox="0 0 34 34"><defs><clipPath id="ac3a"><circle cx="17" cy="17" r="16.250"/></clipPath><filter id="bl3a"><feGaussianBlur stdDeviation=".4"/></filter></defs><circle cx="17" cy="17" r="17" fill="#fff"/><g clip-path="url(#ac3a)"><rect width="34" height="34" fill="#c2c5ca"/><g filter="url(#bl3a)"><path d="M2 35C0 16 5 1.500 17 1.500C29 1.500 34 16 32 35Z" fill="#16110f"/><ellipse cx="17" cy="17.500" rx="6.800" ry="10.500" fill="#8d5b43"/><path d="M9.500 14C10 8 15 5.500 17.500 5.500C14.500 8 12 11 9.500 14ZM24.500 14C24 8 20 5.500 17.500 5.500C20 8 22.500 11 24.500 14Z" fill="#16110f"/><path d="M12 13.800H15.500M18.800 13.800H22.200" stroke="#2a1a14" stroke-width="1.100"/><path d="M9 35C10 28 24 28 25 35Z" fill="#22201f"/></g></g></svg>
        <div class="nm">Lucy Foreman</div>
        <div class="ds">Signed up for the newsletter "Signup for<br>our weekly deals"</div>
      </div>
    </div>
    <div class="sb" style="top:46.500px;width:3.4px"><i style="height:92.600px"></i></div>
  </div><!--/ACT-IN-->
  <div class="card" id="c-leads" style="left:533.5px;top:399.4px;width:270.2px;height:271px">
    <div class="ct" id="t-leads" style="left:12.3px;top:12.6px">Latest leads</div>
    <div class="seeall" style="left:224px;top:12.7px">See all</div>
    <svg class="abs" style="left:250.3px;top:13.1px" width="8" height="7.4" viewBox="0 0 8 7.4" fill="none" stroke="#2b3550" stroke-width="1.1" stroke-linecap="round" stroke-linejoin="round"><path d="M.6 3.7H7.2M4.2 .7L7.3 3.7L4.2 6.7"/></svg>
    <div class="abs" style="left:0;top:35.3px;width:100%;height:1px;background:#e4ebf2"></div>
    <div class="ld" style="top:35.9px">
      <div class="n">John Smith</div><div class="sd" style="left:55.3px">See details</div><div class="d">02/02/2025 at 3:43 PM</div>
      <svg class="li" style="top:23.6px" width="6.4" height="7.2" viewBox="0 0 7.2 8.4"><path d="M.2 1.6a.7 .7 0 0 1 .7-.7H2.2V.2H5V.9H6.3a.7 .7 0 0 1 .7 .7V7.6a.7 .7 0 0 1-.7 .7H.9a.7 .7 0 0 1-.7-.7Z" fill="#5d6577"/><path d="M1.9 3.4H5.3M1.9 4.9H5.3M1.9 6.4H4.2" stroke="#fff" stroke-width=".7"/></svg><div class="ln" style="left:22.3px;top:22px">Contact with Listing: <b>Apartment in Downtown</b></div>
      <div class="ln" style="top:34.8px">E-mail: <b>brandon@sample.com</b><em>•</em>Phone: <b>(123) 456-7890</b></div>
      <div class="q">"I'm interested in this listing. Can you send me more details?"</div>
    </div>
    <div class="ld" style="top:103.1px">
      <div class="n">Jane Doe</div><div class="sd" style="left:48.4px">See details</div><div class="d">02/02/2025 at 3:43 PM</div>
      <svg class="li" style="top:23.8px" width="6.6" height="7" viewBox="0 0 7.6 8.4" fill="none" stroke="#5d6577"><rect x=".6" y="1.5" width="6.4" height="6.3" rx=".7" stroke-width=".9"/><path d="M.6 2.4H7" stroke-width="1.2"/><path d="M2.1 .3V1.6M5.5 .3V1.6" stroke-width=".9"/></svg><div class="ln" style="left:22.3px;top:22px">Contact with Event: <b>Food Festival 2025</b></div>
      <div class="ln" style="top:34.8px">E-mail: <b>jane.doe@example.com</b><em>•</em>Phone: <b>(123) 456-7890</b></div>
      <div class="q">"Can I bring my kids to this event?"</div>
    </div>
    <div class="ld" style="top:170.3px">
      <div class="n">Alice Johnson</div><div class="sd" style="left:64.4px">See details</div><div class="d">02/02/2025 at 3:43 PM</div>
      <svg class="li" style="top:24.6px" width="6.6" height="5.6" viewBox="0 0 7 6" fill="none" stroke="#5d6577" stroke-width=".9"><rect x=".5" y=".5" width="6" height="5" rx=".5"/><path d="M.5 2H6.5M3.8 2V5.5"/></svg><div class="ln" style="left:22.3px;top:22px">Contact with Classified: <b>Used Bike for Sale</b></div>
      <div class="ln" style="top:34.8px">E-mail: <b>alice.johnson@example.com</b><em>•</em>Phone: <b>(123) 456-7890</b></div>
      <div class="q">"Is the bike still available?"</div>
    </div>
    <div class="ld" style="top:237.5px">
      <div class="n">Anonymous User</div><div class="sd" style="left:74.3px">See details</div><div class="d">02/02/2025 at 3:43 PM</div>
      <svg class="li" style="top:24.6px" width="6.8" height="6" viewBox="0 0 7 6.2" fill="#5d6577"><path d="M.3 .8a.5 .5 0 0 1 .5-.5H4.4a.5 .5 0 0 1 .5 .5V3.2a.5 .5 0 0 1-.5 .5H1.6L.3 4.8Z"/><path d="M5.4 1.8H6.2a.5 .5 0 0 1 .5 .5V5.9L5.6 5H2.6a.5 .5 0 0 1-.5-.5V4.2H5a.4 .4 0 0 0 .4-.4Z"/></svg><div class="ln" style="left:22.3px;top:22px">Contact form submission<b></b></div>
      
      
    </div>
    <div class="sb" style="top:35.9px"><i style="height:80.6px"></i></div>
  </div>
</div>

<!--ACT-FL--><div id="fl"><div class="card act " style="left:0;top:0;width:380px;height:381.41px">
    <div class="ct at" style="left:17.31px;top:24.77px">Activity timeline</div>
    <div class="sel"><span>Listings</span><svg class="abs" style="left:79.66px;top:11.54px" width="7.60" height="5.07" viewBox="0 0 7 4.6" fill="none" stroke="#7a9bd0" stroke-width="1.1"><path d="M.5 .6L3.5 3.8L6.5 .6"/></svg></div>
    <div class="scr">
      <div class="bdg" style="top:0;background:#0d4a8b"><svg class="abs" style="left:14.64px;top:5.35px" width="13.23" height="12.67" viewBox="0 0 9.4 9" fill="none" stroke="#fff" stroke-width="1.1" stroke-linejoin="round"><path d="M.8 .8H8.600V6.200H2.700L.8 8Z"/></svg></div>
      <div class="dt" style="top:27.87px">11/12/2023<br>14:32 am</div>
      <div class="it" style="top:0;height:142.57px">
        <svg class="av" width="46.16" height="46.16" viewBox="0 0 34 34"><defs><clipPath id="ac1b"><circle cx="17" cy="17" r="16.250"/></clipPath><filter id="bl1b"><feGaussianBlur stdDeviation=".4"/></filter></defs><circle cx="17" cy="17" r="17" fill="#fff"/><g clip-path="url(#ac1b)"><rect width="34" height="34" fill="#d0cfce"/><g filter="url(#bl1b)"><rect x="0" y="0" width="10" height="10" fill="#a89482"/><rect x="24" y="1" width="6" height="9" fill="#f4efe8"/><rect x="28" y="6" width="7" height="20" fill="#9a5f58"/><path d="M2 36C3 28 5 19 7 13C9 6 13 2.500 19 2.500C25 2.500 28 6.500 29 12C30 17 31 22 29.500 25.500C28 28 25 28.500 22 28.500L13 36Z" fill="#17110f"/><path d="M17 24L24 22L25 30L19 32Z" fill="#d9a58f"/><ellipse cx="16" cy="16" rx="8.400" ry="10.300" fill="#e3ae98" transform="rotate(-20 16 16)"/><path d="M6.500 13.500C8 7 14 4 21 6C16 7.500 10 10 6.500 13.500Z" fill="#17110f"/><ellipse cx="18.800" cy="18.800" rx="3.200" ry="2.800" fill="#eec0af"/><ellipse cx="11.500" cy="17.500" rx="2" ry="2.400" fill="#e9b6a4"/><path d="M9.800 14.800L12.600 13.800M16.200 12.400L19.400 11.200" stroke="#3a2a25" stroke-width="1"/><path d="M12.200 22C14 23.600 17.600 22.800 19.400 20.200" stroke="#b5564f" stroke-width="1" fill="none"/><path d="M1 36C2 28 4 22 6.500 18C8 24 12 29 19 30.500L14 36Z" fill="#17110f"/><path d="M18 35C19.500 31 25 28.500 31.500 30L33 36Z" fill="#f4f4f6"/></g></g></svg>
        <div class="nm">Susan Lewis</div>
        <div class="ds">Wrote a new review for<br><a>Girard Realtor</a></div>
        <svg class="th" width="72.76" height="55.31" viewBox="0 0 100 100" preserveAspectRatio="none"><defs><filter id="tb1b" x="-10%" y="-10%" width="120%" height="120%"><feGaussianBlur stdDeviation="1.100"/></filter><filter id="tc1b" x="-10%" y="-10%" width="120%" height="120%"><feGaussianBlur stdDeviation="2.400"/></filter><linearGradient id="tg1b" x1="0" x2="1"><stop offset="0" stop-color="#cdc9c4"/><stop offset=".3" stop-color="#dedbd7"/><stop offset=".65" stop-color="#eeedeb"/><stop offset="1" stop-color="#e4e2df"/></linearGradient></defs><rect width="100" height="100" fill="url(#tg1b)"/><g filter="url(#tc1b)"><rect x="0" y="16" width="8" height="14" fill="#e0d3b0"/><path d="M12 -4C13 12 19 25 28 31C34 35 40 33 44 38C48 43 55 44 58.500 39C61.500 33 57.500 25 57 18C58.500 10 58 4 57 -4Z" fill="#f0d3c2"/><ellipse cx="34" cy="12" rx="14" ry="9" fill="#f6e3d8"/><path d="M51.500 -4H58.500C59 8 58.500 16 56.500 21C53.500 15 52.500 7 51.500 -4Z" fill="#e6bca8"/><path d="M36 33C38 38 43 39 45.500 36.500" stroke="#d79c8e" stroke-width="2.500" fill="none"/></g><g filter="url(#tb1b)"><path d="M19 71L59 40L88 71L84 73L84 104L23 104L23 73Z" fill="#e9dabd"/><path d="M19 71L59 40L88 71L86 74L59 45L21 74Z" fill="#a58a68"/><rect x="23.500" y="74" width="2.500" height="30" fill="#b9a07c"/><path d="M60 93a7 11 0 0 1 14 0Z" fill="#7a5c3e"/><path d="M60 93a7 11 0 0 1 7 -11V93Z" fill="#f1ece4"/><rect x="81" y="82" width="2.500" height="11" fill="#bba581"/><path d="M43.500 35L46 47" stroke="#8a5a48" stroke-width="2"/><path d="M40 47C42 42 50 42 52 47L50.500 60L46 69L41 66L39 56Z" fill="#26262b"/><path d="M51 45C56 42 60 47 58.500 54L57 61L52.500 58Z" fill="#34343b"/><path d="M40 64L44 66L37.500 97L33.500 96Z" fill="#4b3a2c"/><path d="M46 62L50 63L47 88L43 87Z" fill="#20222c"/><path d="M51 58L55.500 58L52 104H47Z" fill="#a98a4c"/><path d="M55 62L57.500 62L57 104H54.500Z" fill="#55565c"/></g><rect x=".5" y=".6" width="99" height="98.800" fill="none" stroke="#fff" stroke-opacity=".55" stroke-width="1.200"/></svg>
        <div class="qt">The house is wonderful, with several bathrooms<br>and bedrooms, the place is cozy and has a lovely<br>view.</div>
      </div>
      <div class="bdg" style="top:153.97px;background:#0d7bf2"><svg class="abs" style="left:16.04px;top:5.07px" width="10.13" height="12.67" viewBox="0 0 7.2 9"><path d="M.2 1a.8 .8 0 0 1 .8-.8H4.500L7 2.700V8a.8 .8 0 0 1-.8 .8H1a.8 .8 0 0 1-.8-.8Z" fill="#fff"/><path d="M4.300 .2V2.900H7Z" fill="#b8d6fb"/></svg></div>
      <div class="dt" style="top:181.84px">11/12/2023<br>14:32 am</div>
      <div class="it" style="top:153.97px;height:91.34px">
        <svg class="av" width="46.16" height="46.16" viewBox="0 0 34 34"><defs><clipPath id="ac2b"><circle cx="17" cy="17" r="16.250"/></clipPath><filter id="bl2b"><feGaussianBlur stdDeviation=".4"/></filter></defs><circle cx="17" cy="17" r="17" fill="#fff"/><g clip-path="url(#ac2b)"><rect width="34" height="34" fill="#4d6650"/><g filter="url(#bl2b)"><rect x="0" y="0" width="12" height="18" fill="#3d403b"/><rect x="1" y="11" width="6" height="6" fill="#9a9c98"/><rect x="22" y="2" width="12" height="6" fill="#39423a"/><rect x="24" y="6.500" width="9" height="5" fill="#86aed2"/><path d="M0 17.600L10.500 16.200L11.500 20.500L0 23Z" fill="#b85a28"/><rect x="0" y="24" width="34" height="11" fill="#85766f"/><path d="M0 35V24C4 21.500 9 20.500 13 20.500L19 22L22 35Z" fill="#85766f"/><path d="M17.500 23L25 20.500C29 21.500 32 23 34 25V35H21Z" fill="#141c31"/><path d="M11.500 18H21.500V24L17 26L12 23Z" fill="#7d5038"/><ellipse cx="16.300" cy="12.600" rx="6.300" ry="7.900" fill="#94603f"/><ellipse cx="15.500" cy="11" rx="3.500" ry="3" fill="#ab7552"/><path d="M9.300 10.500C8 4 12 1.200 16.500 1.200C21.500 1.200 24.500 4.500 23.200 10.500C21.500 6.800 11.500 6.800 9.300 10.500Z" fill="#1b1310"/><path d="M10.200 14.500C10.500 21.500 14 21.800 16.500 21.800C19 21.800 22 21 22.500 14.500C21 18.500 12 18.500 10.200 14.500Z" fill="#22150f"/><path d="M13.200 15.400C15 17.200 18.200 17.200 19.800 15.400Z" fill="#f5f1ee"/><path d="M11.800 10.200H14.800M17.500 10.200H20.500" stroke="#2a1a12" stroke-width="1"/></g></g></svg>
        <div class="nm">Scott Crane</div>
        <div class="ds">Updated the listing <a>A</a><br><a>California Rent A Car</a><br><a>Test Driving</a></div>
        <svg class="th th2" width="72.76" height="55.31" viewBox="0 0 100 100" preserveAspectRatio="none"><defs><filter id="tb2b" x="-10%" y="-10%" width="120%" height="120%"><feGaussianBlur stdDeviation="1.100"/></filter><linearGradient id="tg2b" x1="0" y1="0" x2="0" y2="1"><stop offset="0" stop-color="#aba5bb"/><stop offset=".25" stop-color="#ccc9d6"/><stop offset=".5" stop-color="#b7bbc7"/><stop offset=".575" stop-color="#c9ccd3"/><stop offset=".59" stop-color="#74767b"/><stop offset=".75" stop-color="#55565b"/><stop offset="1" stop-color="#36373c"/></linearGradient><radialGradient id="tv2b" cx=".5" cy=".45" r=".75"><stop offset=".55" stop-color="#000" stop-opacity="0"/><stop offset="1" stop-color="#1a1830" stop-opacity=".42"/></radialGradient></defs><rect width="100" height="100" fill="url(#tg2b)"/><g filter="url(#tb2b)"><ellipse cx="52" cy="20" rx="40" ry="16" fill="#dedce6" opacity=".6"/><rect x="0" y="30" width="22" height="27" fill="#8e95a8" opacity=".6"/><rect x="80" y="30" width="20" height="27" fill="#9499aa" opacity=".5"/><path d="M8 28V58M93 27V58" stroke="#aab0bd" stroke-width="1.600"/><path d="M4 28.500H12M89 27.500H97" stroke="#d9dbe2" stroke-width="2.200"/><rect x="91.500" y="54" width="3" height="4" fill="#c9a73a"/><rect x="45.200" y="82" width="4.800" height="18" fill="#c9a73a"/><ellipse cx="50" cy="78" rx="33" ry="3.500" fill="#17181c"/><path d="M33 28C38 26.500 62 26.500 67 28L72 40C77 41 81 44 82 50V76H18V50C19 44 23 41 28 40Z" fill="#202329"/><path d="M34.500 29.500C40 28.300 60 28.300 65.500 29.500L70.500 40H29.500Z" fill="#626a74"/><path d="M28 40C40 38.500 60 38.500 72 40L70 45H30Z" fill="#9a9ea6"/><path d="M19.500 35.500H24.500V39.500H20.500ZM75.500 35.500H80.500L79.500 39.500H75.500Z" fill="#0f1013"/><rect x="30" y="47" width="40" height="9.500" rx="2" fill="#07080a"/><rect x="32" y="62" width="36" height="8" rx="1.500" fill="#0a0b0d"/><rect x="18" y="64" width="7.500" height="14.500" rx="2" fill="#08090b"/><rect x="74.500" y="64" width="7.500" height="14.500" rx="2" fill="#08090b"/><ellipse cx="26" cy="50" rx="3" ry="2.200" fill="#dfe5ee"/><ellipse cx="74" cy="50" rx="3" ry="2.200" fill="#dfe5ee"/><ellipse cx="26.500" cy="65.500" rx="2.400" ry="2" fill="#eef1f6"/><ellipse cx="73.500" cy="65.500" rx="2.400" ry="2" fill="#eef1f6"/></g><rect width="100" height="100" fill="url(#tv2b)"/></svg>
      </div>
      <div class="bdg" style="top:256.15px;background:#c0579e"><svg class="abs" style="left:14.64px;top:6.19px" width="13.23" height="10.70" viewBox="0 0 9.4 7.6" fill="none" stroke="#fff" stroke-width="1.1" stroke-linejoin="round"><rect x=".7" y=".7" width="8" height="6.200" rx=".8"/><path d="M1 1.300L4.700 4.200L8.400 1.300"/></svg></div>
      <div class="dt" style="top:284.01px">11/12/2023<br>14:32 am</div>
      <div class="it" style="top:256.15px;height:112.59px">
        <svg class="av" width="46.16" height="46.16" viewBox="0 0 34 34"><defs><clipPath id="ac3b"><circle cx="17" cy="17" r="16.250"/></clipPath><filter id="bl3b"><feGaussianBlur stdDeviation=".4"/></filter></defs><circle cx="17" cy="17" r="17" fill="#fff"/><g clip-path="url(#ac3b)"><rect width="34" height="34" fill="#c2c5ca"/><g filter="url(#bl3b)"><path d="M2 35C0 16 5 1.500 17 1.500C29 1.500 34 16 32 35Z" fill="#16110f"/><ellipse cx="17" cy="17.500" rx="6.800" ry="10.500" fill="#8d5b43"/><path d="M9.500 14C10 8 15 5.500 17.500 5.500C14.500 8 12 11 9.500 14ZM24.500 14C24 8 20 5.500 17.500 5.500C20 8 22.500 11 24.500 14Z" fill="#16110f"/><path d="M12 13.800H15.500M18.800 13.800H22.200" stroke="#2a1a14" stroke-width="1.100"/><path d="M9 35C10 28 24 28 25 35Z" fill="#22201f"/></g></g></svg>
        <div class="nm">Lucy Foreman</div>
        <div class="ds">Signed up for the newsletter "Signup for<br>our weekly deals"</div>
      </div>
    </div>
    <div class="sb" style="top:65.44px;width:4.79px"><i style="height:130.33px"></i></div>
  </div></div><!--/ACT-FL-->
<div id="cz">
  <div class="hd">
    <svg class="abs" style="left:20px;top:13.3px" width="14.2" height="14.2" viewBox="0 0 8 8" fill="#fff"><path d="M0 6.3V8H1.7L6.4 3.3L4.7 1.600ZM7.800 1.900a.5 .5 0 0 0 0-.7L6.800 .2a.5 .5 0 0 0-.7 0L5.300 1L7 2.700Z"/></svg>
    <span id="czh">Customize dashboard</span>
    <svg class="abs" style="left:221px;top:16.6px" width="10.4" height="6.8" viewBox="0 0 10.4 6.8" fill="none" stroke="#fff" stroke-width="1.7"><path d="M.8 6L5.2 1.500L9.600 6"/></svg>
  </div>
  <div class="tg" style="top:55.8px"><svg width="9" height="7.4" viewBox="0 0 9 7.4" fill="none" stroke="#fff" stroke-width="1.5"><path d="M.9 3.8L3.3 6.1L8.2 1"/></svg><i></i></div><div class="tl" id="tl0" style="top:56.4px">Tutorial</div>
  <div class="tg" style="top:94.0px"><svg width="9" height="7.4" viewBox="0 0 9 7.4" fill="none" stroke="#fff" stroke-width="1.5"><path d="M.9 3.8L3.3 6.1L8.2 1"/></svg><i></i></div><div class="tl" id="tl1" style="top:94.6px">Status</div>
  <div class="tg" style="top:132.0px"><svg width="9" height="7.4" viewBox="0 0 9 7.4" fill="none" stroke="#fff" stroke-width="1.5"><path d="M.9 3.8L3.3 6.1L8.2 1"/></svg><i></i></div><div class="tl" id="tl2" style="top:132.6px">Latest transactions</div>
  <div class="tg" style="top:170.0px"><svg width="9" height="7.4" viewBox="0 0 9 7.4" fill="none" stroke="#fff" stroke-width="1.5"><path d="M.9 3.8L3.3 6.1L8.2 1"/></svg><i></i></div><div class="tl" id="tl3" style="top:170.6px">To be approved</div>
  <div class="tg" style="top:208.0px"><svg width="9" height="7.4" viewBox="0 0 9 7.4" fill="none" stroke="#fff" stroke-width="1.5"><path d="M.9 3.8L3.3 6.1L8.2 1"/></svg><i></i></div><div class="tl" id="tl4" style="top:208.6px">Activity timeline</div>
  <div class="tg" style="top:246.0px"><svg width="9" height="7.4" viewBox="0 0 9 7.4" fill="none" stroke="#fff" stroke-width="1.5"><path d="M.9 3.8L3.3 6.1L8.2 1"/></svg><i></i></div><div class="tl" id="tl5" style="top:246.6px">Latests leads</div>
  <div class="tg" style="top:284.2px"><svg width="9" height="7.4" viewBox="0 0 9 7.4" fill="none" stroke="#fff" stroke-width="1.5"><path d="M.9 3.8L3.3 6.1L8.2 1"/></svg><i></i></div><div class="tl" id="tl6" style="top:284.8px">Browse the main areas</div>
</div>

</body>
</html>
